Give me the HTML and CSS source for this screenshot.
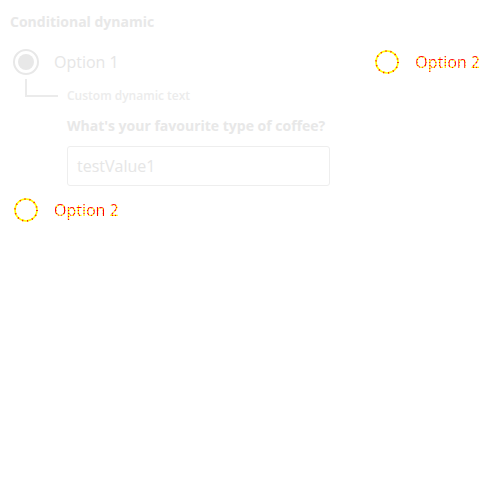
FILE: index.html
```html
<!DOCTYPE html>
<html>
<head>
<meta charset="utf-8">
<link rel="stylesheet" href="styles.css">
</head>
<body>
<div class="page">
  <div class="title">Conditional dynamic</div>
  <div class="row">
    <div class="group">
      <div class="option">
        <span class="radio checked"><span class="dot"></span></span>
        <span class="label muted">Option 1</span>
      </div>
      <div class="branch">
        <span class="connector"></span>
        <span class="dyn">Custom dynamic text</span>
      </div>
      <div class="question">
        <div class="qlabel">What's your favourite type of coffee?</div>
        <div class="input">testValue1</div>
      </div>
    </div>
    <div class="option right">
      <svg class="ring" width="26" height="26" viewBox="0 0 26 26"><circle cx="13" cy="13" r="11" fill="none" stroke="#ffff00" stroke-width="1.6"/><circle cx="13" cy="13" r="11" fill="none" stroke="#ff0000" stroke-width="1.6" stroke-dasharray="1 4"/></svg>
      <span class="label hl">Option 2</span>
    </div>
  </div>
  <div class="option">
    <svg class="ring" width="26" height="26" viewBox="0 0 26 26"><circle cx="13" cy="13" r="11" fill="none" stroke="#ffff00" stroke-width="1.6"/><circle cx="13" cy="13" r="11" fill="none" stroke="#ff0000" stroke-width="1.6" stroke-dasharray="1 4"/></svg>
    <span class="label hl">Option 2</span>
  </div>
</div>
</body>
</html>
```
FILE: styles.css
```css
html, body {
  margin: 0;
  padding: 0;
  background: #ffffff;
}
body {
  font-family: "Open Sans", "Noto Sans", sans-serif;
}
.page {
  padding: 12px 10px 0 13px;
}
.title {
  margin-left: -3px;
  font-size: 14px;
  font-weight: 700;
  color: #e8e8e8;
  line-height: 20px;
  height: 20px;
}
.row {
  display: flex;
  align-items: flex-start;
  margin-top: 17px;
}
.group {
  display: flex;
  flex-direction: column;
}
.option {
  display: flex;
  align-items: center;
  height: 26px;
}
.option.right {
  margin-left: auto;
  margin-right: 10px;
}
.radio {
  box-sizing: border-box;
  width: 26px;
  height: 26px;
  border-radius: 50%;
  border: 2px solid #e8e8e8;
  display: flex;
  align-items: center;
  justify-content: center;
}
.dot {
  width: 16px;
  height: 16px;
  border-radius: 50%;
  background: #e8e8e8;
}
.ring {
  display: block;
  flex: none;
}
.label {
  margin-left: 15px;
  font-size: 16px;
  line-height: 26px;
}
.muted {
  color: #e6e6e6;
}
.hl {
  color: #ff9900;
  background-color: #ffee00;
  background-image: radial-gradient(circle, #ff0000 1px, transparent 1.2px);
  background-size: 3px 3px;
  -webkit-background-clip: text;
  background-clip: text;
  -webkit-text-fill-color: transparent;
}
.branch {
  display: flex;
  align-items: flex-end;
  margin-top: 4px;
  height: 18px;
}
.connector {
  box-sizing: border-box;
  margin-left: 12px;
  width: 33px;
  height: 18px;
  border-left: 2px solid #ebebeb;
  border-bottom: 2px solid #ebebeb;
}
.dyn {
  margin-left: 9px;
  font-size: 12px;
  font-weight: 600;
  color: #ececec;
  line-height: 16px;
  position: relative;
  top: 7px;
}
.question {
  margin-left: 54px;
  margin-top: 19px;
}
.qlabel {
  font-size: 14px;
  font-weight: 700;
  color: #e8e8e8;
  line-height: 20px;
}
.input {
  box-sizing: border-box;
  margin-top: 10px;
  width: 263px;
  height: 40px;
  border: 1px solid #eeeeee;
  border-radius: 3px;
  padding: 0 9px;
  font-size: 16px;
  line-height: 38px;
  color: #e6e6e6;
}
.page > .option {
  margin-top: 11px;
}
```
